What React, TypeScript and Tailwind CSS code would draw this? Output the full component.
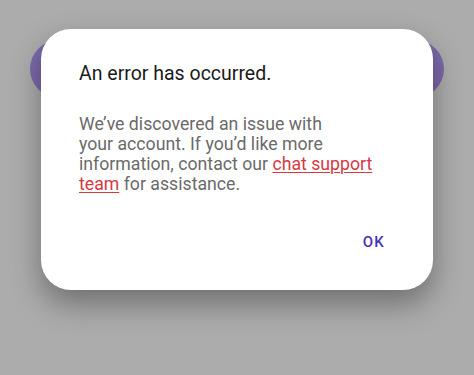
export default function App() {
  return (
    <div
      className="relative h-[375px] w-[474px] overflow-hidden bg-[#acacac]"
      style={{ fontFamily: "Roboto, 'Noto Sans', Arial, sans-serif" }}
    >
      {/* dimmed button behind the dialog */}
      <div className="mx-[30px] mt-[40px] h-[58px] rounded-full bg-[#7b69a9]" />

      <div className="absolute left-[41px] top-[29px] flex h-[261px] w-[392px] flex-col rounded-[30px] bg-white pl-[38px] pr-[48px] pt-[33px] shadow-[0_14px_30px_rgba(0,0,0,0.35)]">
        <h2 className="text-[19.5px] leading-[24px] text-[#1a1a1a]">
          An error has occurred.
        </h2>
        <p className="mt-[28px] text-[17.7px] leading-[20px] text-[#6a6a6a]">
          We’ve discovered an issue with
          <br />
          your account. If you’d like more
          <br />
          information, contact our{" "}
          <a className="text-[#d8383f] underline decoration-1 underline-offset-2">
            chat support
          </a>
          <br />
          <a className="text-[#d8383f] underline decoration-1 underline-offset-2">
            team
          </a>{" "}
          for assistance.
        </p>
        <div className="mt-auto mb-[38px] flex justify-end">
          <button className="text-[15px] font-medium leading-[20px] tracking-[0.08em] text-[#4b2fb9]">
            OK
          </button>
        </div>
      </div>
    </div>
  );
}
